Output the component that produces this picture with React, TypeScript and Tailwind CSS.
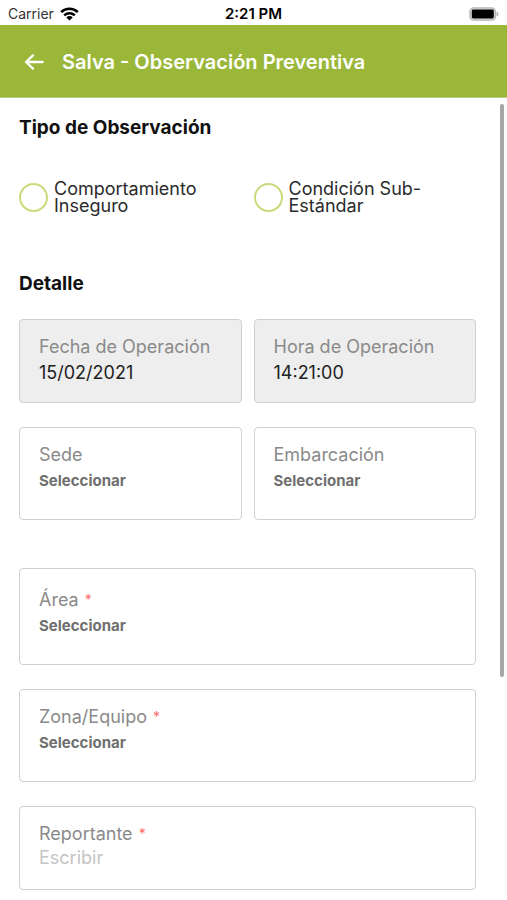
import React from 'react';

interface FieldProps {
    id: string;
    label: string;
    required?: boolean;
    className?: string;
    children: React.ReactNode;
}

const Field: React.FC<FieldProps> = ({ id, label, required, className = '', children }) => {
    return (
        <div className={`rounded border border-[#d0d0d0] px-[19px] ${className}`}>
            <label htmlFor={id} className="flex gap-1.5 text-lg leading-6 text-[#8a8a8a]">
                {label}
                {required && <span className="text-sm leading-6 text-[#ff6b6b]">*</span>}
            </label>
            {children}
        </div>
    );
};

const SelectInput: React.FC<{ id: string }> = ({ id }) => {
    return (
        <select
            id={id}
            className="mt-0.5 block h-6 w-full appearance-none bg-transparent text-[15px] font-bold text-[#6f6f6f] outline-none"
        >
            <option>Seleccionar</option>
        </select>
    );
};

const RadioOption: React.FC<{ value: string; children: React.ReactNode }> = ({ value, children }) => {
    return (
        <label className="flex items-center gap-1.5 text-lg leading-[17px] text-[#2b2b2b]">
            <input
                type="radio"
                name="tipo"
                value={value}
                className="size-[29px] shrink-0 appearance-none rounded-full border-2 border-[#c9dc7c] checked:bg-[#9ab73a]"
            />
            <span>{children}</span>
        </label>
    );
};

const StatusBar: React.FC = () => {
    return (
        <div className="grid h-[25px] grid-cols-3 items-center bg-white px-2 pt-0.5 text-sm leading-5 text-black">
            <div className="flex items-center gap-1.5 text-[#333]">
                Carrier
                <svg width="19" height="14" viewBox="0 0 19 14" fill="none" stroke="#000" aria-hidden="true">
                    <path d="M1.2 5.1a12 12 0 0 1 16.6 0" strokeWidth="2.6" />
                    <path d="M4.2 8.3a7.7 7.7 0 0 1 10.6 0" strokeWidth="2.4" />
                    <path d="M9.5 13.6 6.3 10.4a4.6 4.6 0 0 1 6.4 0z" fill="#000" stroke="none" />
                </svg>
            </div>
            <div className="text-center text-[15px] font-semibold">2:21 PM</div>
            <svg className="justify-self-end" width="30" height="14" viewBox="0 0 30 14" aria-hidden="true">
                <rect x="1" y="0.9" width="25.4" height="12.2" rx="3.6" fill="#d8d8d8" stroke="#b5b5b5" strokeWidth="1.4" />
                <rect x="2.8" y="2.6" width="22" height="8.8" rx="1.4" fill="#000" />
                <path d="M27.6 4.4c2.6.8 2.6 4.4 0 5.2z" fill="#b5b5b5" />
            </svg>
        </div>
    );
};

const App: React.FC = () => {
    return (
        <div className="flex min-h-screen flex-col bg-white font-[Inter,sans-serif]">
            <StatusBar />
            <header className="flex h-[73px] items-center gap-[18px] border-b border-[#b9c98a] bg-[#9ab73a] px-6 pt-0.5 text-white">
                <button type="button" aria-label="Volver">
                    <svg width="20" height="18" viewBox="0 0 20 18" fill="none" stroke="currentColor" strokeWidth="2.4" strokeLinecap="round" strokeLinejoin="round">
                        <path d="M18.6 9H2.2M9 2.4 2 9l7 6.6" />
                    </svg>
                </button>
                <h1 className="text-xl font-semibold">Salva - Observación Preventiva</h1>
            </header>

            <main className="relative grow pt-4 pr-[31px] pb-2.5 pl-[19px]">
                <h2 className="text-[19px] leading-7 font-bold text-[#111]">Tipo de Observación</h2>
                <div className="mt-[38px] grid grid-cols-2 gap-3">
                    <RadioOption value="comportamiento">Comportamiento Inseguro</RadioOption>
                    <RadioOption value="condicion">Condición Sub-Estándar</RadioOption>
                </div>

                <h2 className="mt-14 text-[19px] leading-7 font-bold text-[#111]">Detalle</h2>
                <form className="mt-[21px] flex flex-col gap-6">
                    <div className="grid grid-cols-2 gap-3">
                        <Field id="fecha" label="Fecha de Operación" className="bg-[#eee] pt-[15px] pb-[17px]">
                            <input
                                id="fecha"
                                readOnly
                                defaultValue="15/02/2021"
                                className="mt-0.5 block h-6 w-full bg-transparent text-lg text-[#222] outline-none"
                            />
                        </Field>
                        <Field id="hora" label="Hora de Operación" className="bg-[#eee] pt-[15px] pb-[17px]">
                            <input
                                id="hora"
                                readOnly
                                defaultValue="14:21:00"
                                className="mt-0.5 block h-6 w-full bg-transparent text-lg text-[#222] outline-none"
                            />
                        </Field>
                    </div>
                    <div className="mb-6 grid grid-cols-2 gap-3">
                        <Field id="sede" label="Sede" className="pt-[15px] pb-[26px]">
                            <SelectInput id="sede" />
                        </Field>
                        <Field id="embarcacion" label="Embarcación" className="pt-[15px] pb-[26px]">
                            <SelectInput id="embarcacion" />
                        </Field>
                    </div>
                    <Field id="area" label="Área" required className="pt-[19px] pb-[26px]">
                        <SelectInput id="area" />
                    </Field>
                    <Field id="zona" label="Zona/Equipo" required className="pt-[15px] pb-[26px]">
                        <SelectInput id="zona" />
                    </Field>
                    <Field id="reportante" label="Reportante" required className="pt-[15px] pb-[19px]">
                        <input
                            id="reportante"
                            placeholder="Escribir"
                            className="block h-6 w-full bg-transparent text-lg text-[#222] outline-none placeholder:text-[#c4c4c4]"
                        />
                    </Field>
                </form>

                <div className="absolute top-1.5 right-[3px] h-5/7 w-1 rounded-full bg-[#a6a6a6]" aria-hidden="true" />
            </main>
        </div>
    );
};

export default App;
